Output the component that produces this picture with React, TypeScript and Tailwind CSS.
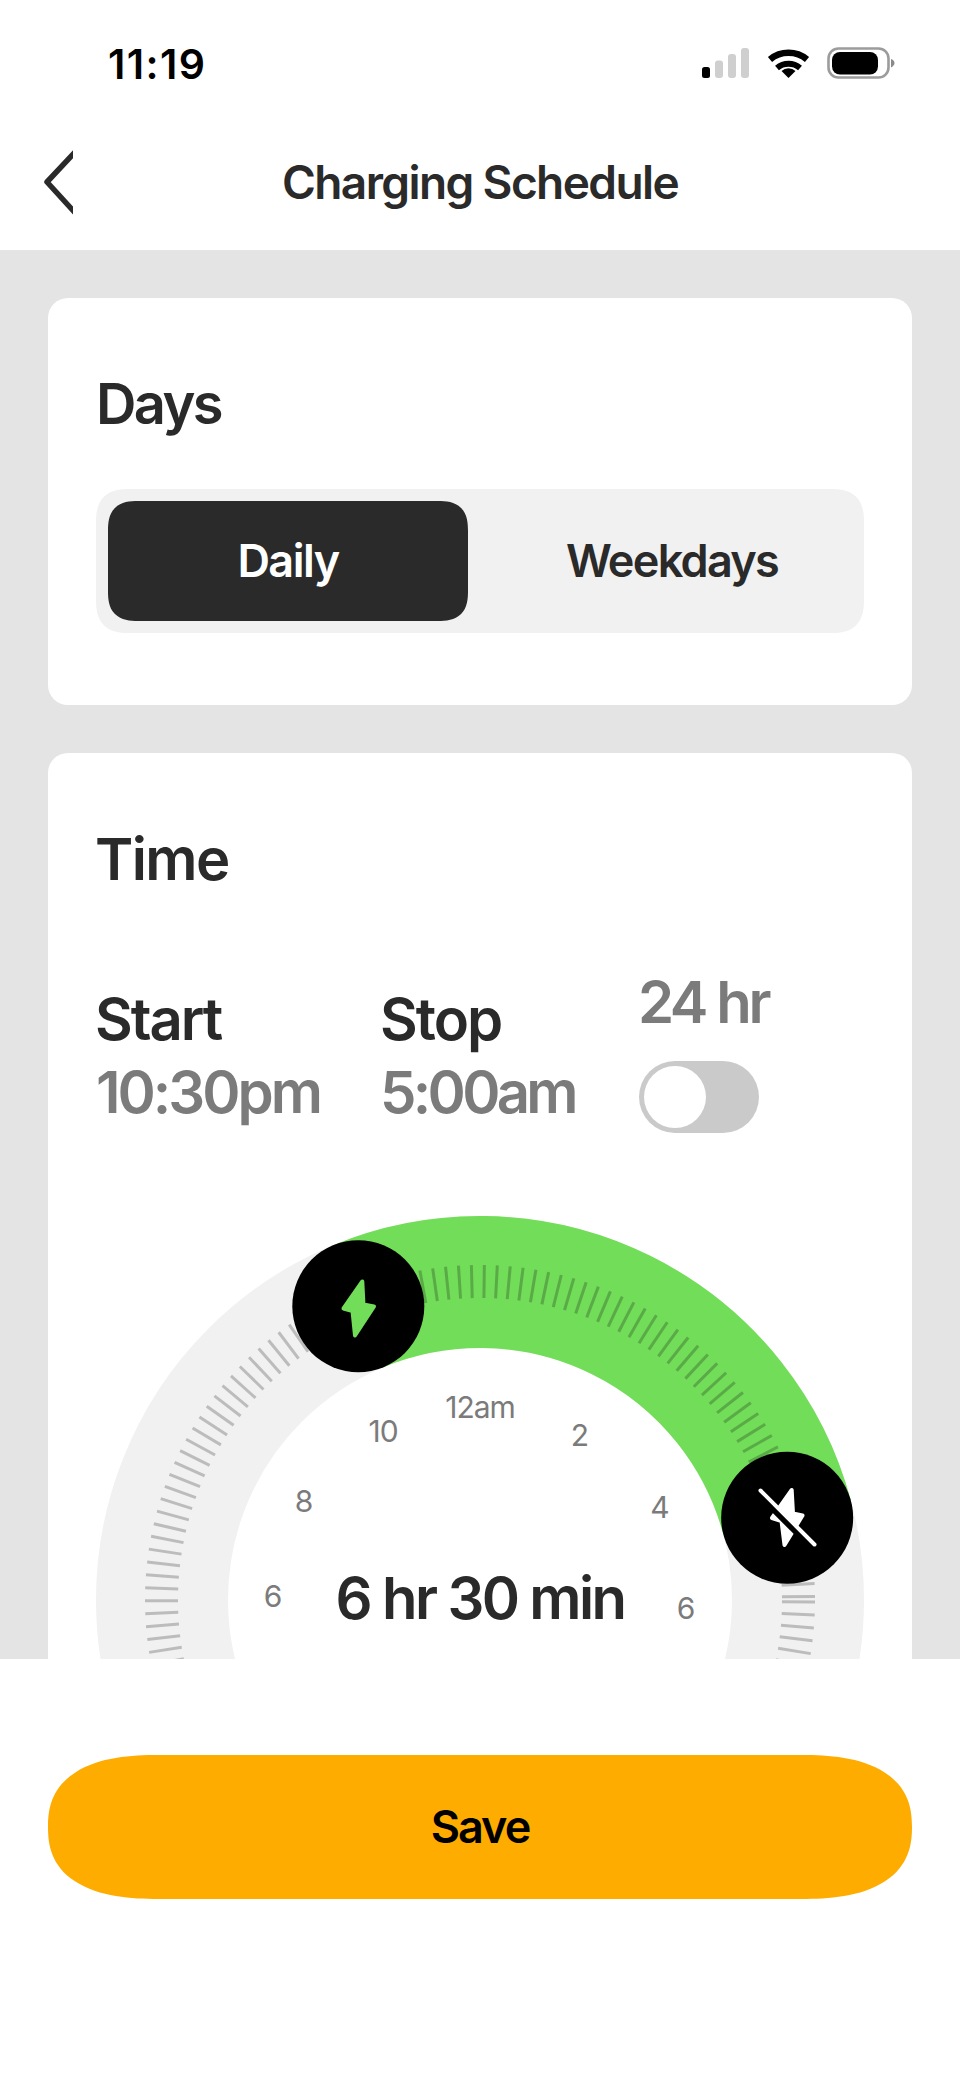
const ticks = Array.from({ length: 163 }, (_, i) => -0.6 - i * 2.2164);

function polar(cx: number, cy: number, r: number, deg: number) {
  const rad = (deg * Math.PI) / 180;
  return [cx + r * Math.cos(rad), cy + r * Math.sin(rad)];
}

function Dial() {
  // angles are clockwise from +x. 10:30pm and 5:00am on a 24 hr face
  const startAngle = -112.5;
  const endAngle = -15;
  const [sx, sy] = polar(384, 384, 318, startAngle);
  const [ex, ey] = polar(384, 384, 318, endAngle);

  return (
    <div className="relative w-[768px] h-[768px] shrink-0">
      <svg width="768" height="768" viewBox="0 0 768 768" className="block">
        <circle cx="384" cy="384" r="318" fill="none" stroke="#f1f1f1" strokeWidth="132" />
        <path d={`M${sx} ${sy} A318 318 0 0 1 ${ex} ${ey}`} fill="none" stroke="#72dd58" strokeWidth="132" />
        {ticks.map((a, i) => {
          const [x1, y1] = polar(384, 384, 302, a);
          const [x2, y2] = polar(384, 384, 335, a);
          const on = a > startAngle && a < endAngle;
          return <line key={i} x1={x1} y1={y1} x2={x2} y2={y2} stroke={on ? "#5aab47" : "#bcbcbc"} strokeWidth="3" />;
        })}

        {/* start knob */}
        <circle cx={sx} cy={sy} r="66" fill="#000000" />
        <g transform="translate(196 26)">
          <path d="M70.3 39.5 L71.5 62.5 L82 64.5 L63 93.5 L60.5 69 L51.5 66.5 Z" fill="#72dd58" stroke="#72dd58" strokeWidth="4" strokeLinejoin="round" />
        </g>

        {/* stop knob */}
        <circle cx={ex} cy={ey} r="66" fill="#000000" />
        <g transform="translate(-96 -1216)">
          <path d="M791.7 1490 L793 1513.5 L802.5 1515.5 L784.5 1545 L781.5 1521 L772 1518 Z" fill="#ffffff" stroke="#ffffff" strokeWidth="4" strokeLinejoin="round" />
          <line x1="758" y1="1494" x2="812" y2="1548" stroke="#000000" strokeWidth="6" />
          <line x1="760.5" y1="1490.5" x2="814.5" y2="1544.5" stroke="#ffffff" strokeWidth="4" strokeLinecap="round" />
        </g>
      </svg>

      {/* hour labels */}
      <span className="absolute left-[384px] top-[191px] -translate-x-1/2 -translate-y-1/2 text-[30px] leading-none tracking-[-1px] text-[#7b7b7b]">12am</span>
      <span className="absolute left-[287px] top-[215px] -translate-x-1/2 -translate-y-1/2 text-[30px] leading-none tracking-[-1px] text-[#7b7b7b]">10</span>
      <span className="absolute left-[208px] top-[285px] -translate-x-1/2 -translate-y-1/2 text-[30px] leading-none text-[#7b7b7b]">8</span>
      <span className="absolute left-[177px] top-[380px] -translate-x-1/2 -translate-y-1/2 text-[30px] leading-none text-[#7b7b7b]">6</span>
      <span className="absolute left-[484px] top-[219px] -translate-x-1/2 -translate-y-1/2 text-[30px] leading-none text-[#7b7b7b]">2</span>
      <span className="absolute left-[564px] top-[291px] -translate-x-1/2 -translate-y-1/2 text-[30px] leading-none text-[#7b7b7b]">4</span>
      <span className="absolute left-[590px] top-[392px] -translate-x-1/2 -translate-y-1/2 text-[30px] leading-none text-[#7b7b7b]">6</span>
      <span className="absolute left-[384px] top-[382px] -translate-x-1/2 -translate-y-1/2 whitespace-nowrap text-[58px] leading-none font-semibold tracking-[-2.6px] text-[#2a2a2a]">6 hr 30 min</span>
    </div>
  );
}

function StatusIcons() {
  return (
    <svg width="194" height="34" viewBox="0 0 194 34" className="block">
      <rect x="1" y="20" width="8" height="11" rx="2.5" fill="#000000" />
      <rect x="14" y="13.5" width="8" height="17.5" rx="3" fill="#cfcfcf" />
      <rect x="27" y="7" width="8" height="24" rx="3" fill="#cfcfcf" />
      <rect x="40" y="1" width="8" height="30" rx="3" fill="#cfcfcf" />
      <path d="M69 12.5 A29 29 0 0 1 106 12.5" fill="none" stroke="#000000" strokeWidth="6.5" />
      <path d="M76 21 A18 18 0 0 1 99 21" fill="none" stroke="#000000" strokeWidth="6" />
      <path d="M87.5 31 L80.5 24 A10 10 0 0 1 94.5 24 Z" fill="#000000" />
      <rect x="127.5" y="1.5" width="60" height="29" rx="10" fill="none" stroke="#9c9c9c" strokeWidth="2.6" />
      <rect x="131" y="5" width="46" height="22.5" rx="8" fill="#000000" />
      <path d="M190 12 C192.5 13 193.5 14.5 193.5 16 C193.5 17.5 192.5 19 190 20.5 Z" fill="#8a8a8a" />
    </svg>
  );
}

export default function App() {
  return (
    <div className="w-[960px] h-[2079px] bg-white overflow-hidden font-['Inter',sans-serif] text-[#2a2a2a]">
      {/* HEADER */}
      <header className="h-[250px] bg-white">
        <div className="flex items-center justify-between pt-[46px] pl-[108px] pr-[65px] h-[82px]">
          <span className="text-[41px] leading-none font-semibold tracking-[1.4px] text-black">11:19</span>
          <StatusIcons />
        </div>
        <div className="relative flex items-center justify-center mt-[64px] h-[72px]">
          <svg width="31" height="68" viewBox="0 0 31 68" className="absolute left-[42px] top-[2px]">
            <path d="M36 1 L5 34 L36 68" fill="none" stroke="#2a2a2a" strokeWidth="5.5" strokeLinejoin="round" />
          </svg>
          <h1 className="text-[46px] leading-none font-semibold tracking-[-1.6px]">Charging Schedule</h1>
        </div>
      </header>

      {/* SCROLL AREA */}
      <main className="h-[1409px] bg-[#e4e4e4] overflow-hidden px-12 pt-12">
        <section className="bg-white rounded-[20px] h-[407px] px-12 pt-[76px]">
          <h2 className="text-[56px] leading-[60px] font-semibold tracking-[-2.6px]">Days</h2>
          <div className="flex gap-6 mt-[55px] h-[144px] rounded-[34px] [corner-shape:superellipse(1.4)] bg-[#f1f1f1] p-3">
            <div className="w-[360px] rounded-[30px] [corner-shape:superellipse(1.4)] bg-[#2a2a2a] text-white flex items-center justify-center text-[45px] font-semibold tracking-[-1.5px]">Daily</div>
            <div className="w-[360px] flex items-center justify-center text-[45px] font-semibold tracking-[-1.7px]">Weekdays</div>
          </div>
        </section>

        <section className="bg-white rounded-[20px] mt-12 h-[1000px] px-12 pt-[76px]">
          <h2 className="text-[58px] leading-[60px] font-semibold tracking-[-1.6px] -ml-px">Time</h2>
          <div className="flex mt-[54px]">
            <div className="w-[285px] pt-[40px]">
              <div className="text-[58px] leading-[72px] font-semibold tracking-[-2px] -ml-px">Start</div>
              <div className="text-[58px] leading-[72px] font-semibold tracking-[-3px] text-[#7b7b7b] mt-px">10:30pm</div>
            </div>
            <div className="w-[258px] pt-[40px]">
              <div className="text-[58px] leading-[72px] font-semibold tracking-[-2px] -ml-px">Stop</div>
              <div className="text-[58px] leading-[72px] font-semibold tracking-[-3.7px] text-[#7b7b7b] mt-px -ml-px">5:00am</div>
            </div>
            <div className="pt-[25px]">
              <div className="text-[58px] leading-[68px] font-semibold tracking-[-3.4px] text-[#7b7b7b] -ml-px">24 hr</div>
              <div className="mt-[25px] w-[120px] h-[72px] rounded-full bg-[#cacaca] p-[5px]">
                <div className="w-[62px] h-[62px] rounded-full bg-white" />
              </div>
            </div>
          </div>
          <div className="mt-[83px]">
            <Dial />
          </div>
        </section>
      </main>

      {/* FOOTER */}
      <footer className="h-[420px] bg-white px-12 pt-[96px]">
        <button className="w-full h-[144px] rounded-[110px/72px] [corner-shape:superellipse(1.3)] bg-[#ffac00] text-black text-[45px] font-semibold tracking-[-2px]">Save</button>
      </footer>
    </div>
  );
}
